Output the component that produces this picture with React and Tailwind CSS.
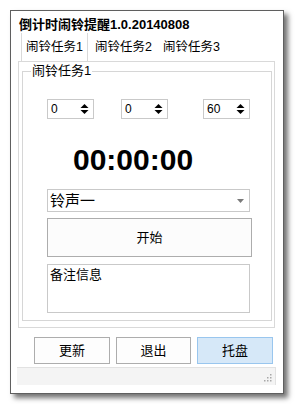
import React from 'react';

const FONT = '"Liberation Sans", "Noto Sans CJK SC", sans-serif';

function Spinner({ value }) {
  return (
    <div className="flex h-[20px] w-[47px] items-center border border-[#c9c9c9] bg-white pl-[3px] pr-[4px]">
      <span className="flex-1 text-[12px] leading-none text-black">{value}</span>
      <svg width="9" height="12" viewBox="0 0 9 12" className="text-black">
        <path d="M0.5 5 L4.5 1 L8.5 5 Z" fill="currentColor" />
        <path d="M0.5 7 L4.5 11 L8.5 7 Z" fill="currentColor" />
      </svg>
    </div>
  );
}

function Tab({ label, active, className = '' }) {
  return (
    <div
      className={`flex h-full items-center text-[12.5px] text-black ${active ? 'border-x border-[#d9d9d9] bg-white px-[4px]' : ''} ${className}`}
    >
      {label}
    </div>
  );
}

export default function App() {
  return (
    <div className="h-[404px] w-[295px] bg-white pl-[10px] pt-[10px]" style={{ fontFamily: FONT }}>
      <div className="flex h-[384px] w-[274px] flex-col border border-[#5f5f5f] bg-white shadow-[4px_4px_5px_rgba(0,0,0,0.55)]">
        {/* title */}
        <div className="flex h-[22px] items-end pl-[8px] text-[13px] font-bold leading-[16px] text-black">
          倒计时闹铃提醒1.0.20140808
        </div>

        {/* tabs */}
        <div className="flex h-[28px] items-stretch pl-[10px]">
          <Tab label="闹铃任务1" active />
          <Tab label="闹铃任务2" className="pl-[7px]" />
          <Tab label="闹铃任务3" className="pl-[11px]" />
        </div>

        {/* tab panel */}
        <div className="ml-[7px] h-[267px] w-[257px] border border-[#d9d9d9] bg-white pl-[3px] pt-[2px]">
          <fieldset className="h-[257px] w-[250px] border border-[#d6d6d6]">
            <legend className="ml-[8px] px-[1px] text-[13px] leading-[14px] text-black">闹铃任务1</legend>

            <div className="pl-[24px]">
              <div className="mt-[21px] flex">
                <Spinner value="0" />
                <div className="ml-[27px]">
                  <Spinner value="0" />
                </div>
                <div className="ml-[35px]">
                  <Spinner value="60" />
                </div>
              </div>

              <div className="ml-[26px] mt-[26px] text-[30px] font-bold leading-[30px] text-black">
                00:00:00
              </div>

              <div className="mt-[14px] flex h-[23px] w-[203px] items-center border border-[#c9c9c9] bg-white pl-[2px] pr-[5px]">
                <span className="flex-1 text-[15px] leading-none text-black">铃声一</span>
                <svg width="7" height="4" viewBox="0 0 7 4">
                  <path d="M0 0 L7 0 L3.5 4 Z" fill="#7a7a7a" />
                </svg>
              </div>

              <div className="mt-[6px] flex h-[39px] w-[205px] items-center justify-center border border-[#adadad] bg-[#fcfcfc] text-[13px] text-black">
                开始
              </div>

              <div className="mt-[7px] h-[49px] w-[203px] border border-[#c9c9c9] bg-white px-[2px] pt-[2px] text-[13px] leading-[16px] text-black">
                备注信息
              </div>
            </div>
          </fieldset>
        </div>

        {/* bottom buttons */}
        <div className="mt-[9px] flex gap-[6px] pl-[23px]">
          <div className="flex h-[27px] w-[76px] items-center justify-center border border-[#adadad] bg-[#fdfdfd] text-[13px] text-black">
            更新
          </div>
          <div className="flex h-[27px] w-[75px] items-center justify-center border border-[#adadad] bg-[#fdfdfd] text-[13px] text-black">
            退出
          </div>
          <div className="flex h-[27px] w-[76px] items-center justify-center border border-[#99c6ee] bg-[#d6e8f8] text-[13px] text-black">
            托盘
          </div>
        </div>

        {/* status bar */}
        <div className="ml-[6px] mt-[3px] flex h-[18px] w-[259px] items-end justify-end border-t border-r border-[#e2e2e2] bg-[#f4f4f4] pb-[3px] pr-[3px]">
          <svg width="8" height="8" viewBox="0 0 8 8">
            <rect x="6" y="0" width="1.5" height="1.5" fill="#a8a8a8" />
            <rect x="3" y="3" width="1.5" height="1.5" fill="#a8a8a8" />
            <rect x="6" y="3" width="1.5" height="1.5" fill="#a8a8a8" />
            <rect x="0" y="6" width="1.5" height="1.5" fill="#a8a8a8" />
            <rect x="3" y="6" width="1.5" height="1.5" fill="#a8a8a8" />
            <rect x="6" y="6" width="1.5" height="1.5" fill="#a8a8a8" />
          </svg>
        </div>
      </div>
    </div>
  );
}
